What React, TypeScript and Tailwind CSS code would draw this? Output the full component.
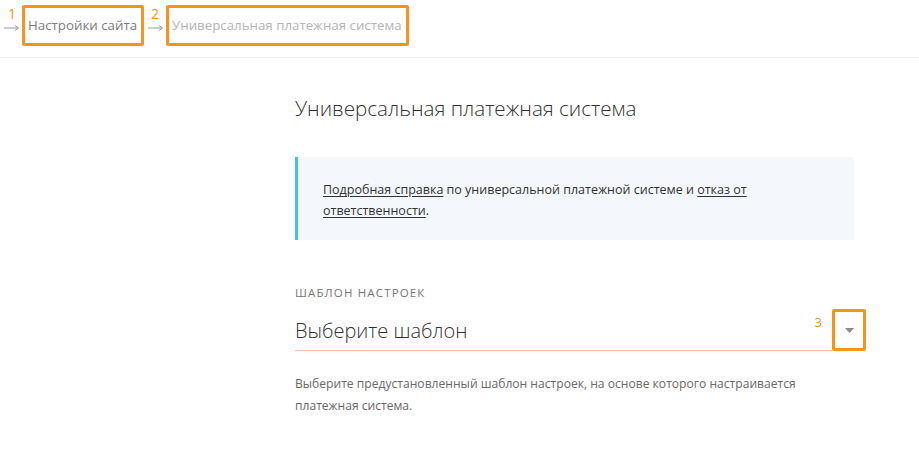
import React from "react";

function Arrow() {
  return (
    <svg width="16" height="8" viewBox="0 0 16 8" className="block">
      <path d="M0 4 H14 M11 1.5 L14.5 4 L11 6.5" stroke="#9a9a9a" strokeWidth="1" fill="none" />
    </svg>
  );
}

export default function App() {
  const font = { fontFamily: '"Open Sans", "Noto Sans", sans-serif' };
  return (
    <div className="w-[919px] h-[463px] bg-white overflow-hidden" style={font}>
      <header className="h-[58px] border-b border-[#ededed] flex items-start pt-[5px] pl-[4px]">
        <div className="flex flex-col items-start w-[18px] pt-[1px]">
          <span className="text-[14px] leading-[15px] text-[#f7941d] pl-[4px]">1</span>
          <span className="mt-[3px]"><Arrow /></span>
        </div>
        <div className="w-[122px] h-[41px] border-[3px] border-[#f7941d] rounded-[2px] flex items-center pl-[3px] text-[13.3px] font-medium text-[#7d7d7d] whitespace-nowrap">
          Настройки сайта
        </div>
        <div className="flex flex-col items-start w-[22px] pt-[1px] pl-[4px]">
          <span className="text-[14px] leading-[15px] text-[#f7941d] pl-[3px]">2</span>
          <span className="mt-[3px]"><Arrow /></span>
        </div>
        <div className="w-[243px] h-[41px] border-[3px] border-[#f7941d] rounded-[2px] flex items-center pl-[3px] text-[13.3px] text-[#b5b5b5] whitespace-nowrap">
          Универсальная платежная система
        </div>
      </header>

      <main className="pl-[295px] pt-[36px]">
        <h1 className="text-[20.6px] font-light text-[#333] leading-[28px]">Универсальная платежная система</h1>

        <div className="mt-[35px] w-[559px] h-[83px] bg-[#f4f8fc] border-l-[3px] border-[#3cc5d6] pl-[25px] pt-[22px] text-[12.5px] leading-[21px] text-[#333]">
          <p>
            <a className="underline underline-offset-2">Подробная справка</a> по универсальной платежной системе и{" "}
            <a className="underline underline-offset-2">отказ от ответственности</a>.
          </p>
        </div>

        <div className="mt-[45px] text-[11.5px] tracking-[0.1em] uppercase text-[#777] leading-[16px]">Шаблон настроек</div>

        <div className="flex items-end mt-[8px]">
          <div className="w-[537px] h-[40px] border-b border-[#f6c2ae] flex items-center justify-between">
            <span className="text-[20px] font-light text-[#333]">Выберите шаблон</span>
            <span className="text-[13px] text-[#f7941d] self-start mt-[2px] mr-[10px]">3</span>
          </div>
          <div className="w-[34px] h-[42px] border-[3px] border-[#f7941d] rounded-[2px] flex items-center justify-center">
            <svg width="9" height="5" viewBox="0 0 9 5"><path d="M0 0 H9 L4.5 5 Z" fill="#8a8a8a" /></svg>
          </div>
        </div>

        <p className="mt-[22px] w-[520px] text-[12.1px] leading-[22px] text-[#6a6a6a]">
          Выберите предустановленный шаблон настроек, на основе которого настраивается платежная система.
        </p>
      </main>
    </div>
  );
}
